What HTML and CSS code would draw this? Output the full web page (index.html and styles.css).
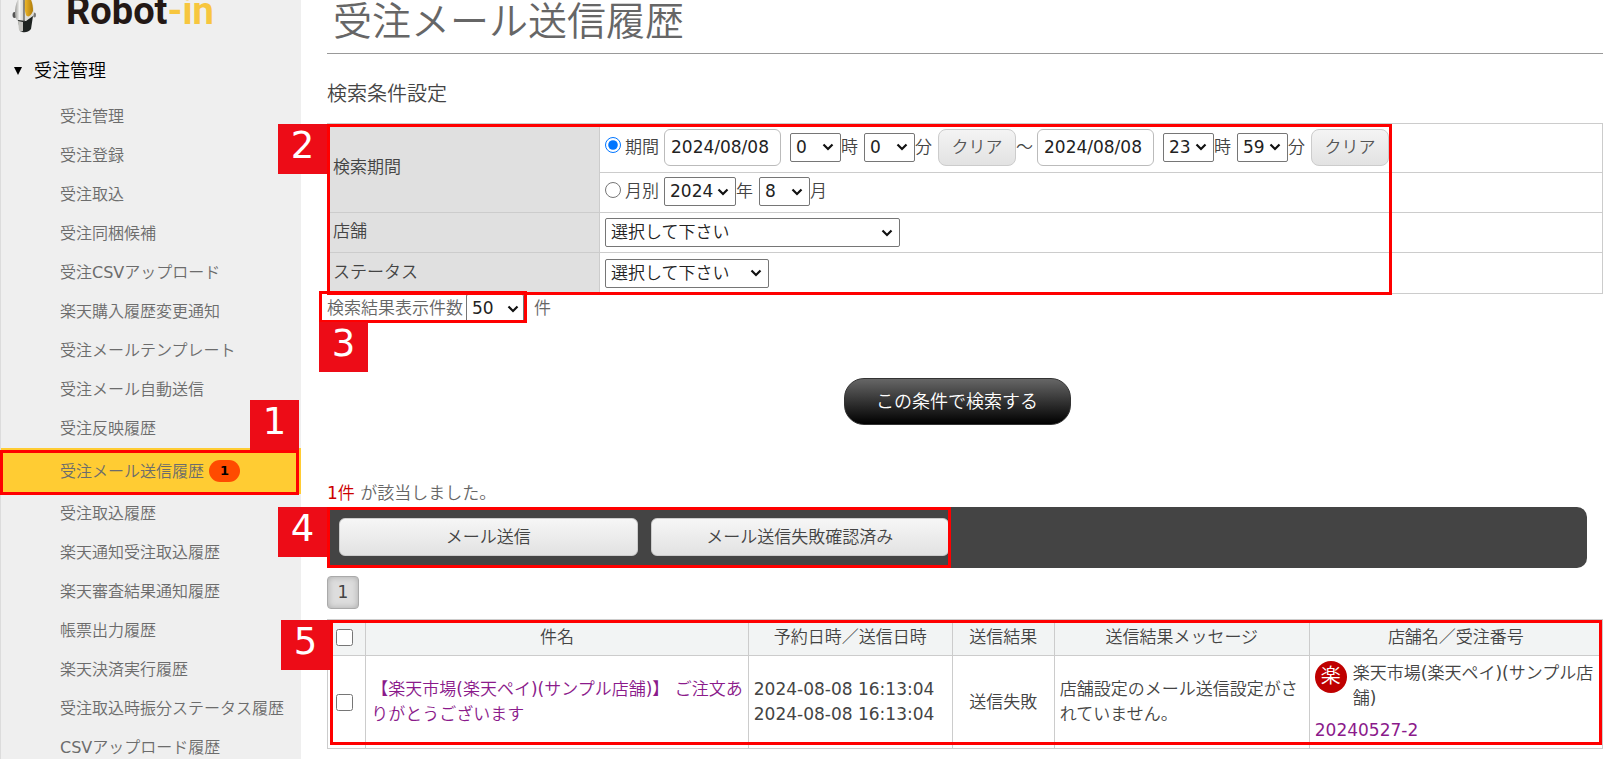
FILE: index.html
```html
<!DOCTYPE html>
<html lang="ja">
<head>
<meta charset="utf-8">
<title>受注メール送信履歴</title>
<link rel="stylesheet" href="styles.css">
</head>
<body>
<div class="layout">
  <aside class="sidebar">
    <div class="logo">
      <svg class="logo-mark" viewBox="0 0 24 40" aria-hidden="true">
        <defs>
          <linearGradient id="shell" x1="0" x2="1"><stop offset="0" stop-color="#9a9a97"/><stop offset=".45" stop-color="#f4f4f2"/><stop offset="1" stop-color="#c4c4bf"/></linearGradient>
          <linearGradient id="visor" x1="0" x2="1"><stop offset="0" stop-color="#f0b92a"/><stop offset="1" stop-color="#b07c0a"/></linearGradient>
        </defs>
        <ellipse cx="2.500" cy="22" rx="2" ry="3" fill="#555"/>
        <ellipse cx="22.500" cy="22" rx="1.500" ry="2.500" fill="#777"/>
        <path d="M11 2C5 4 3 13 3 20c0 5 2 8 4 9l6-1V2z" fill="url(#shell)"/>
        <path d="M12 2c7 1 10 9 10 18-1 5-3 7-6 8l-4-1z" fill="#deded9"/>
        <path d="M6 27l8 1 7-5-2 13c-3 4-8 4-11 2z" fill="#1e2321"/>
        <path d="M6 28l5 1v9c-2 1-3 0-4-1z" fill="#c4c4c0"/>
        <path d="M14 2c5 1 7 9 7 16-2 5-5 7-7 4-2-6-2-14 0-20z" fill="url(#visor)"/>
        <path d="M12 3v26" fill="none" stroke="#3c3c3c"/>
      </svg>
      <span class="logo-text">Robot<span class="logo-accent">-in</span></span>
    </div>
    <h2 class="menu-title"><svg class="menu-arrow" viewBox="0 0 8 8" aria-hidden="true"><path d="M0 0h8L4 8z"/></svg>受注管理</h2>
    <nav class="menu">
      <a href="#">受注管理</a>
      <a href="#">受注登録</a>
      <a href="#">受注取込</a>
      <a href="#">受注同梱候補</a>
      <a href="#">受注CSVアップロード</a>
      <a href="#">楽天購入履歴変更通知</a>
      <a href="#">受注メールテンプレート</a>
      <a href="#">受注メール自動送信</a>
      <a href="#">受注反映履歴</a>
      <a href="#" class="active">受注メール送信履歴<span class="count">1</span><span class="frame frame-menu"><span class="tag tag-above">1</span></span></a>
      <a href="#">受注取込履歴</a>
      <a href="#">楽天通知受注取込履歴</a>
      <a href="#">楽天審査結果通知履歴</a>
      <a href="#">帳票出力履歴</a>
      <a href="#">楽天決済実行履歴</a>
      <a href="#">受注取込時振分ステータス履歴</a>
      <a href="#">CSVアップロード履歴</a>
    </nav>
  </aside>

  <main class="main">
    <h1 class="page-title">受注メール送信履歴</h1>
    <h2 class="section-title">検索条件設定</h2>
    <div class="conditions-wrap">
      <table class="conditions">
        <tr class="tall">
          <th rowspan="2" scope="row">検索期間</th>
          <td>
            <div class="fields">
              <label class="choice"><input type="radio" name="mode" checked>期間</label>
              <input class="date" type="text" value="2024/08/08" aria-label="開始日">
              <label class="unit unit-first"><select class="short"><option>0</option></select>時</label>
              <label class="unit"><select class="short"><option>0</option></select>分</label>
              <button class="clear" type="button">クリア</button>
              <span class="tilde">～</span>
              <input class="date" type="text" value="2024/08/08" aria-label="終了日">
              <label class="unit unit-first"><select class="short"><option>23</option></select>時</label>
              <label class="unit"><select class="short"><option>59</option></select>分</label>
              <button class="clear" type="button">クリア</button>
            </div>
          </td>
        </tr>
        <tr class="month">
          <td>
            <div class="fields">
              <label class="choice"><input type="radio" name="mode">月別</label>
              <label class="unit"><select class="year"><option>2024</option></select>年</label>
              <label class="unit"><select class="short"><option>8</option></select>月</label>
            </div>
          </td>
        </tr>
        <tr>
          <th scope="row"><label for="shop">店舗</label></th>
          <td><div class="fields"><select id="shop" class="shop"><option>選択して下さい</option></select></div></td>
        </tr>
        <tr>
          <th scope="row"><label for="status">ステータス</label></th>
          <td><div class="fields"><select id="status" class="status"><option>選択して下さい</option></select></div></td>
        </tr>
      </table>
      <span class="frame frame-conditions"><span class="tag tag-left">2</span></span>
    </div>
    <div class="per-page">
      <div class="per-page-pick">
        <label for="limit">検索結果表示件数</label>
        <select id="limit" class="limit"><option>50</option></select>
        <span class="frame frame-limit"><span class="tag tag-below">3</span></span>
      </div>
      <span>件</span>
    </div>
    <div class="submit-row"><button class="submit" type="button">この条件で検索する</button></div>
    <p class="hits"><span class="hits-number">1件</span> が該当しました。</p>
    <div class="actions">
      <div class="actions-group">
        <button class="action" type="button">メール送信</button>
        <button class="action" type="button">メール送信失敗確認済み</button>
        <span class="frame frame-actions"><span class="tag tag-left">4</span></span>
      </div>
    </div>
    <div class="pager"><button class="page" type="button">1</button></div>
    <div class="results-wrap">
      <table class="results">
        <colgroup><col class="c-check"><col class="c-subject"><col class="c-date"><col class="c-result"><col class="c-message"><col class="c-shop"></colgroup>
        <thead>
          <tr>
            <th><input type="checkbox" aria-label="すべて選択"></th>
            <th>件名</th>
            <th>予約日時／送信日時</th>
            <th>送信結果</th>
            <th>送信結果メッセージ</th>
            <th>店舗名／受注番号</th>
          </tr>
        </thead>
        <tbody>
          <tr>
            <td><input type="checkbox" aria-label="選択"></td>
            <td><a href="#">【楽天市場(楽天ペイ)(サンプル店舗)】 ご注文ありがとうございます</a></td>
            <td>2024-08-08 16:13:04<br>2024-08-08 16:13:04</td>
            <td class="center">送信失敗</td>
            <td>店舗設定のメール送信設定がされていません。</td>
            <td class="shop-cell">
              <div class="shop-name"><span class="shop-icon">楽</span><span>楽天市場(楽天ペイ)(サンプル店舗)</span></div>
              <a class="order" href="#">20240527-2</a>
            </td>
          </tr>
        </tbody>
      </table>
      <span class="frame frame-results"><span class="tag tag-left">5</span></span>
    </div>
  </main>
</div>
</body>
</html>
```
FILE: styles.css
```css
* { box-sizing: border-box; }

body {
  margin: 0;
  background: #fff;
  color: #444;
  font: 400 17px/25px "DejaVu Sans", "Noto Sans CJK JP DemiLight", "Noto Sans CJK JP", sans-serif;
  overflow: hidden;
}

input, select, button { font: inherit; margin: 0; }
a { text-decoration: none; }

.layout {
  display: flex;
  min-height: 100vh;
  border-bottom: 1px solid #eee;
}

/* Sidebar */
.sidebar {
  flex: none;
  width: 301px;
  background: #efefef;
  border-left: 1px solid #dcdcdc;
}

.logo {
  display: flex;
  align-items: flex-end;
  gap: 30px;
  height: 33px;
  padding-left: 11px;
}
.logo-mark { flex: none; width: 24px; height: 40px; }
.logo-text {
  color: #231815;
  font: 700 38px/44px Roboto, sans-serif;
}
.logo-accent { color: #f7c63e; }

.menu-title {
  display: flex;
  align-items: center;
  gap: 12px;
  margin: 0;
  padding: 22px 0 11px 13px;
  color: #000;
  font-size: 18px;
  font-weight: 400;
  line-height: 31px;
}
.menu-arrow { width: 8px; height: 8px; }

.menu { display: flex; flex-direction: column; }
.menu a {
  position: relative;
  height: 39px;
  padding-left: 59px;
  color: #6c6c6c;
  font-size: 16px;
  line-height: 39px;
  white-space: nowrap;
}
.menu .active {
  display: flex;
  align-items: center;
  gap: 5px;
  height: 46px;
  background: #fc3;
}
.count {
  padding: 0 11px;
  border-radius: 11px;
  background: #ff4b00;
  color: #000;
  font-size: 13px;
  font-weight: 700;
  line-height: 22px;
}

/* Numbered callouts */
.frame {
  position: absolute;
  border: 3px solid #f00;
  pointer-events: none;
  z-index: 1;
}
.tag {
  position: absolute;
  width: 49px;
  height: 50px;
  background: #ed0c17;
  color: #fff;
  font-size: 37px;
  line-height: 44px;
  text-align: center;
}
.tag-left { top: -3px; right: 100%; margin-right: 3px; }
.tag-above { right: -3px; bottom: 100%; margin-bottom: 3px; }
.tag-below { top: 100%; left: -3px; margin-top: 2px; }
.frame-menu { inset: 2px 2px -1px -1px; }
.frame-conditions { inset: 1px 211px -1px 0; }
.frame-limit { inset: -3px -3px 0 -8px; }
.frame-actions { inset: 0; }
.frame-results { inset: 1px 1px 4px 3px; }

/* Main column */
.main {
  flex: 1;
  min-width: 0;
  padding: 0 14px 10px 26px;
}
.page-title {
  margin: 0;
  padding: 0 0 10px 6px;
  border-bottom: 1px solid #999;
  color: #666;
  font-size: 39px;
  font-weight: 400;
  line-height: 43px;
}
.section-title {
  margin: 25px 0 13px;
  color: #444;
  font-size: 20px;
  font-weight: 400;
  line-height: 31px;
}

.conditions-wrap, .results-wrap { position: relative; }
table { width: 100%; border-collapse: collapse; }
th { font-weight: 400; }

.conditions th, .conditions td {
  height: 40px;
  padding: 0 5px;
  border: 1px solid #ccc;
  text-align: left;
}
.conditions .tall td { height: 49px; padding-bottom: 2px; }
.conditions .month td { padding-bottom: 2px; }
.conditions tr:last-child td { height: 41px; }
.conditions th {
  width: 272px;
  padding-bottom: 2px;
  background: #e0e0e0;
}
.fields { display: flex; align-items: center; white-space: nowrap; }
.fields .date { flex: none; }
.choice { display: flex; align-items: center; gap: 4px; margin-right: 5px; }
.choice input { width: 16px; height: 16px; margin-bottom: 4px; }
.unit { display: flex; align-items: center; margin-right: 6px; }
.unit-first { margin-left: 9px; }
.date {
  width: 117px;
  height: 37px;
  padding: 0 6px;
  border: 1px solid #bbb;
  border-radius: 6px;
  color: #222;
}
select {
  height: 29px;
  padding: 0 20px 0 5px;
  border: 1px solid #767676;
  border-radius: 2px;
  appearance: none;
  background: #fff url("data:image/svg+xml,%3Csvg xmlns='http://www.w3.org/2000/svg' width='12' height='8'%3E%3Cpath d='M1.5 1.5L6 6l4.500-4.500' fill='none' stroke='%23111' stroke-width='2.200'/%3E%3C/svg%3E") no-repeat right 6px center;
  color: #222;
}
.short { width: 51px; }
.year { width: 72px; }
.shop { width: 295px; }
.status { width: 164px; }
.clear {
  width: 78px;
  height: 37px;
  padding: 0;
  border: 1px solid #ccc;
  border-radius: 8px;
  background: linear-gradient(#f4f4f4, #e2e2e2);
  color: #555;
}
.tilde { margin-right: 4px; }

.per-page {
  display: flex;
  align-items: center;
  gap: 10px;
  color: #666;
}
.per-page-pick {
  position: relative;
  display: flex;
  align-items: center;
  gap: 3px;
}
.limit {
  width: 58px;
  background-position: right 4px center;
}

.submit-row {
  padding: 55px 16px 56px 0;
  text-align: center;
}
.submit {
  width: 227px;
  height: 47px;
  border: 1px solid #333;
  border-radius: 20px;
  background: linear-gradient(#666, #000);
  color: #fff;
  font-size: 18px;
}

.hits { margin: 0; padding-bottom: 1px; color: #666; }
.hits-number { color: #c00; }

.actions {
  margin-right: 16px;
  border-radius: 10px;
  background: #444;
}
.actions-group {
  position: relative;
  display: flex;
  gap: 13px;
  width: 624px;
  padding: 11px 2px 12px 12px;
}
.action {
  flex: 1;
  height: 38px;
  padding: 0;
  border: 1px solid #ccc;
  border-radius: 6px;
  background: linear-gradient(#f6f6f6, #e2e2e2);
  color: #444;
}

.pager { padding: 8px 0 10px; }
.page {
  display: block;
  width: 32px;
  height: 33px;
  padding: 0;
  border: 1px solid #aaa;
  border-radius: 4px;
  background: #ddd;
  box-shadow: inset 0 0 6px #aaa;
  color: #444;
}

.results { table-layout: fixed; }
.results th, .results td { border: 1px solid #ccc; padding: 0 5px; }
.results th { height: 36px; background: #f2f4f4; }
.results td { height: 93px; }
.results th:first-child, .results td:first-child { padding: 0; }
.results input { display: block; width: 17px; height: 17px; margin: 0 0 0 8px; }
.results a { color: #8b1a8b; }
.results .center { text-align: center; }
.c-check { width: 3%; }
.c-subject { width: 30%; }
.c-date { width: 16%; }
.c-result { width: 8%; }
.c-message { width: 20%; }
.c-shop { width: 23%; }
.results .shop-cell { padding-top: 5px; vertical-align: top; }
.shop-name { display: flex; gap: 6px; }
.shop-icon {
  flex: none;
  width: 32px;
  height: 32px;
  border-radius: 50%;
  background: #bf0000;
  color: #fff;
  font-size: 20px;
  line-height: 31px;
  text-align: center;
}
.order { display: block; margin-top: 7px; }
```
